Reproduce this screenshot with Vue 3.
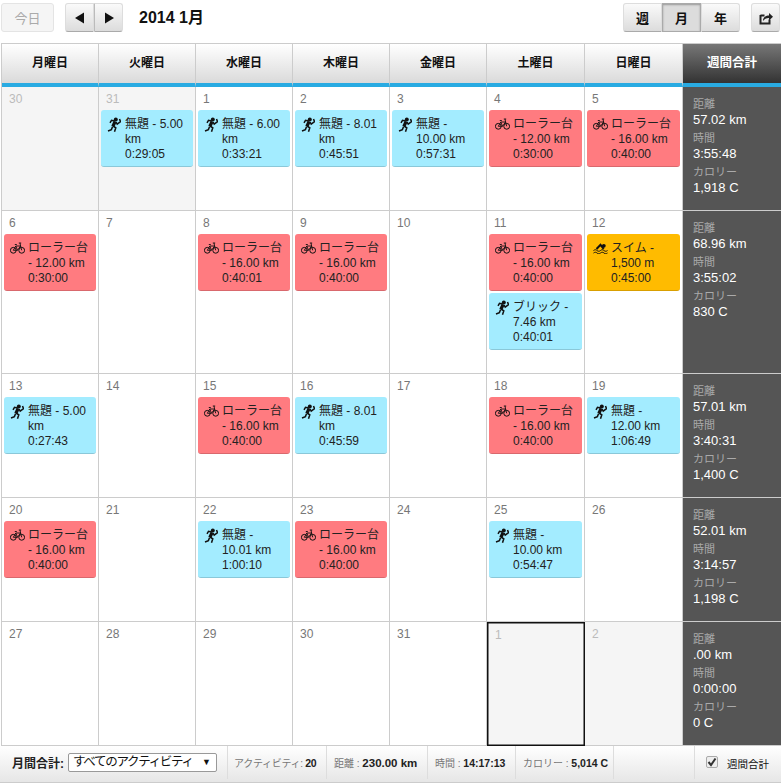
<template>
  <div class="page">
    <div class="toolbar">
      <button class="btn today" disabled>今日</button>
      <div class="btn-group nav">
        <button class="btn"><svg class="arrow" viewBox="0 0 12 12"><path d="M10 .5v11L1 6z" /></svg></button>
        <button class="btn"><svg class="arrow" viewBox="0 0 12 12"><path d="M2 .5v11L11 6z" /></svg></button>
      </div>
      <div class="title">2014 1月</div>
      <div class="spacer"></div>
      <div class="btn-group views">
        <button class="btn">週</button>
        <button class="btn active">月</button>
        <button class="btn">年</button>
      </div>
      <button class="btn share">
        <svg viewBox="0 0 14 14" width="14" height="14">
          <path d="M1.500 4.500h4M1.500 4v8.500h9V8.500" fill="none" stroke="#222" stroke-width="2" />
          <path d="M4 10c0-4 3-5.500 6-5.500V2l4 3.800-4 3.700V7c-3 0-4.500 1-6 3z" fill="#222" />
        </svg>
      </button>
    </div>

    <div class="calendar">
      <div v-for="(name, i) in dayNames" :key="name" class="head" :class="{ 'head-total': i === 7 }">{{ name }}</div>

      <template v-for="(week, w) in weeks" :key="w">
        <div
          v-for="day in week.days"
          :key="day.n + '-' + w"
          class="cell"
          :class="{ off: day.off, selected: day.selected }"
        >
          <div class="day-num">{{ day.n }}</div>
          <div v-for="(item, k) in day.items" :key="k" class="workout" :class="item.type">
            <div class="icon-col">
              <svg v-if="item.type === 'run'" class="ico" viewBox="0 0 14 15">
                <circle cx="8.800" cy="2.400" r="2" />
                <path d="M8 4.800 5.800 9.500" stroke-width="3.200" />
                <path d="M8.500 4.200 4.500 3.300 3 5.800M9 5l1.200 2.200 3.300-2.500-1-2.800M6 9l2.800 1.800-1.300 3.900M5.500 9.800 4.400 12.600 1 14" stroke-width="1.500" />
              </svg>
              <svg v-else-if="item.type === 'bike'" class="ico" viewBox="0 0 15 13">
                <circle cx="3.300" cy="9.300" r="2.900" />
                <circle cx="11.700" cy="9.300" r="2.900" />
                <path d="M3.300 9.300 5.800 5h4.800l1.100 4.300M5.800 5l1.700 4.300H3.300M7.500 9.300 10.600 5M10 2l.6 3M8.800 2h2.400M4.800 3.500h2" stroke-width=".9" />
              </svg>
              <svg v-else class="ico swim" viewBox="0 0 15 11">
                <circle cx="10.800" cy="2.800" r="1.900" />
                <path d="M3.500 6 7.500 1.800l3.200 4" stroke-width="2" />
                <path d="M.5 7.500c1.500-1 2.500-1 3.500 0s2.500 1 3.500 0 2.500-1 3.500 0 2.500 1 3.500 0M.5 10c1.500-1 2.500-1 3.500 0s2.500 1 3.500 0 2.500-1 3.500 0 2.500 1 3.500 0" stroke-width="1" />
              </svg>
            </div>
            <div class="workout-text">
              <div>{{ item.name }} - {{ item.dist }}</div>
              <div>{{ item.time }}</div>
            </div>
          </div>
        </div>
        <div class="totals">
          <div class="t-label">距離</div>
          <div class="t-value">{{ week.dist }}</div>
          <div class="t-label">時間</div>
          <div class="t-value">{{ week.time }}</div>
          <div class="t-label">カロリー</div>
          <div class="t-value">{{ week.cal }}</div>
        </div>
      </template>
    </div>

    <div class="footer">
      <div class="f-sec f-first">
        <b class="f-title">月間合計:</b>
        <div class="select">すべてのアクティビティ<span class="caret">▼</span></div>
      </div>
      <div class="f-sec f-act">アクティビティ: <b>20</b></div>
      <div class="f-sec f-dist">距離 : <b>230.00 km</b></div>
      <div class="f-sec f-time">時間 : <b>14:17:13</b></div>
      <div class="f-sec f-cal">カロリー : <b>5,014 C</b></div>
      <div class="f-sec f-gap"></div>
      <label class="f-check">
        <span class="check"><svg viewBox="0 0 10 10" width="10" height="10"><path d="M1.500 5 4 8l4.500-6.500" fill="none" stroke="#333" stroke-width="2" /></svg></span>
        週間合計
      </label>
    </div>
  </div>
</template>

<script setup>
const dayNames = ['月曜日', '火曜日', '水曜日', '木曜日', '金曜日', '土曜日', '日曜日', '週間合計']

const run = (name, dist, time) => ({ type: 'run', name, dist, time })
const bike = (dist, time) => ({ type: 'bike', name: 'ローラー台', dist, time })
const swim = (dist, time) => ({ type: 'swim', name: 'スイム', dist, time })

const d = (n, items = [], extra = {}) => ({ n, items, ...extra })

const weeks = [
  {
    days: [
      d(30, [], { off: true }),
      d(31, [run('無題', '5.00 km', '0:29:05')], { off: true }),
      d(1, [run('無題', '6.00 km', '0:33:21')]),
      d(2, [run('無題', '8.01 km', '0:45:51')]),
      d(3, [run('無題', '10.00\u00a0km', '0:57:31')]),
      d(4, [bike('12.00 km', '0:30:00')]),
      d(5, [bike('16.00 km', '0:40:00')])
    ],
    dist: '57.02 km',
    time: '3:55:48',
    cal: '1,918 C'
  },
  {
    days: [
      d(6, [bike('12.00 km', '0:30:00')]),
      d(7),
      d(8, [bike('16.00 km', '0:40:01')]),
      d(9, [bike('16.00 km', '0:40:00')]),
      d(10),
      d(11, [bike('16.00 km', '0:40:00'), run('ブリック', '7.46 km', '0:40:01')]),
      d(12, [swim('1,500 m', '0:45:00')])
    ],
    dist: '68.96 km',
    time: '3:55:02',
    cal: '830 C'
  },
  {
    days: [
      d(13, [run('無題', '5.00 km', '0:27:43')]),
      d(14),
      d(15, [bike('16.00 km', '0:40:00')]),
      d(16, [run('無題', '8.01 km', '0:45:59')]),
      d(17),
      d(18, [bike('16.00 km', '0:40:00')]),
      d(19, [run('無題', '12.00\u00a0km', '1:06:49')])
    ],
    dist: '57.01 km',
    time: '3:40:31',
    cal: '1,400 C'
  },
  {
    days: [
      d(20, [bike('16.00 km', '0:40:00')]),
      d(21),
      d(22, [run('無題', '10.01\u00a0km', '1:00:10')]),
      d(23, [bike('16.00 km', '0:40:00')]),
      d(24),
      d(25, [run('無題', '10.00\u00a0km', '0:54:47')]),
      d(26)
    ],
    dist: '52.01 km',
    time: '3:14:57',
    cal: '1,198 C'
  },
  {
    days: [
      d(27),
      d(28),
      d(29),
      d(30),
      d(31),
      d(1, [], { off: true, selected: true }),
      d(2, [], { off: true })
    ],
    dist: '.00 km',
    time: '0:00:00',
    cal: '0 C'
  }
]
</script>

<style>
body {
  background: #fff;
}
</style>

<style scoped>
.page {
  width: 781px;
  height: 783px;
  overflow: hidden;
  font-family: "Liberation Sans", "Noto Sans CJK JP", sans-serif;
  font-size: 12px;
  color: #333;
}

.toolbar {
  height: 43px;
  box-sizing: border-box;
  padding: 3px 1px 0 1px;
  display: flex;
  align-items: flex-start;
}

.spacer {
  flex: 1;
}

.btn {
  height: 29px;
  margin: 0;
  padding: 0;
  border: 1px solid #ddd;
  border-bottom-color: #aaa;
  border-radius: 3px;
  background: linear-gradient(#fafafa, #dcdcdc);
  font-family: inherit;
  font-size: 13px;
  font-weight: bold;
  color: #111;
  display: flex;
  align-items: center;
  justify-content: center;
}

.today {
  width: 53px;
  background: #f5f5f5;
  border-color: #e4e4e4;
  color: #aaa;
  font-weight: normal;
  font-size: 13px;
}

.btn-group {
  display: flex;
}

.btn-group .btn {
  border-radius: 0;
}

.btn-group .btn:first-child {
  border-radius: 3px 0 0 3px;
}

.btn-group .btn:last-child {
  border-radius: 0 3px 3px 0;
}

.nav {
  margin-left: 11px;
}

.nav .btn {
  width: 29px;
}

.nav .btn + .btn {
  border-left-color: #bbb;
}

.arrow {
  width: 12px;
  height: 12px;
  fill: #111;
}

.title {
  margin-left: 16px;
  line-height: 29px;
  font-size: 16px;
  font-weight: bold;
  color: #111;
}

.views .btn {
  width: 39px;
}

.views .active {
  background: #dcdcdc;
  border: 1px solid #aaa;
  box-shadow: inset 0 1px 2px #999;
}

.share {
  width: 29px;
  margin-left: 11px;
}

.calendar {
  margin-left: 1px;
  border-top: 1px solid #ccc;
  border-left: 1px solid #ccc;
  display: grid;
  grid-template-columns: 97px 97px 97px 97px 97px 98px 98px 98px;
}

.head {
  height: 39px;
  line-height: 39px;
  box-sizing: content-box;
  border-right: 1px solid #ccc;
  border-bottom: 4px solid #29abe2;
  background: linear-gradient(#fff, #dadada);
  text-align: center;
  font-weight: bold;
  color: #111;
}

.head-total {
  border-right: 0;
  background: linear-gradient(#777, #333);
  color: #fff;
  font-size: 12.500px;
}

.cell {
  min-height: 124px;
  box-sizing: border-box;
  padding: 0 2px 21px 2px;
  border-right: 1px solid #ccc;
  border-bottom: 1px solid #ccc;
  background: #fff;
}

.cell.off {
  background: #f5f5f5;
}

.cell.off .day-num {
  color: #bbb;
}

.cell.selected {
  border: 1px solid #111;
  box-shadow: inset 0 0 0 0.5px #111;
}

.day-num {
  height: 23px;
  line-height: 24px;
  padding-left: 5px;
  color: #777;
}

.workout {
  height: 57px;
  box-sizing: border-box;
  margin-bottom: 2px;
  padding: 7px 6px 0 0;
  border-bottom: 1px solid rgba(0, 0, 0, 0.15);
  border-radius: 3px;
  display: flex;
  line-height: 15px;
  color: #222;
}

.workout.run {
  background: #a3ecff;
}

.workout.bike {
  background: #ff7b80;
}

.workout.swim {
  background: #ffbb00;
}

.icon-col {
  width: 24px;
  flex: none;
  padding: 0 0 0 6px;
  box-sizing: border-box;
}

.ico {
  display: block;
  width: 14px;
  height: 15px;
  fill: none;
  stroke: #111;
}

.run .ico circle,
.swim .ico circle {
  fill: #111;
  stroke: none;
}

.swim .ico {
  width: 15px;
  height: 11px;
  margin-top: 2px;
}

.bike .ico {
  width: 15px;
  height: 13px;
}

.workout-text {
  width: 62px;
}

.totals {
  background: #555;
  border-bottom: 1px solid #ccc;
  padding: 10px 0 0 10px;
  box-sizing: border-box;
}

.t-label {
  height: 15px;
  line-height: 15px;
  font-size: 11px;
  color: #aaa;
}

.t-value {
  height: 19px;
  line-height: 15px;
  font-size: 13px;
  color: #fff;
}

.footer {
  height: 37px;
  box-sizing: border-box;
  border-bottom: 1px solid #ccc;
  background: linear-gradient(#fff, #e6e6e6);
  display: flex;
  align-items: stretch;
  font-size: 10px;
  color: #777;
}

.f-sec {
  border-right: 1px solid #ddd;
  display: flex;
  align-items: center;
  white-space: pre;
  margin-bottom: 3px;
  box-sizing: border-box;
}

.f-sec b {
  color: #222;
  font-size: 10.500px;
}

.f-first {
  width: 228px;
  padding-left: 12px;
}

.f-sec .f-title {
  font-size: 12px;
  margin-right: 4px;
}

.select {
  width: 149px;
  height: 19px;
  line-height: 17px;
  box-sizing: border-box;
  border: 1px solid #999;
  border-radius: 2px;
  background: #fff;
  padding-left: 4px;
  font-size: 12.500px;
  letter-spacing: -1.300px;
  color: #111;
  position: relative;
  white-space: nowrap;
  overflow: hidden;
}

.caret {
  position: absolute;
  right: 5px;
  top: 0;
  font-size: 9px;
  letter-spacing: 0;
  color: #111;
}

.f-act {
  width: 99px;
  padding-left: 6px;
  letter-spacing: -0.300px;
}

.f-dist {
  width: 101px;
  padding-left: 7px;
}

.f-sec.f-dist b {
  font-size: 11.500px;
}

.f-time {
  width: 88px;
  padding-left: 7px;
}

.f-cal {
  width: 98px;
  padding-left: 7px;
}

.f-gap {
  width: 81px;
}

.f-check {
  flex: 1;
  display: flex;
  align-items: center;
  padding-left: 11px;
  margin-bottom: 2px;
  font-size: 10.500px;
  color: #111;
}

.check {
  width: 12px;
  height: 12px;
  box-sizing: border-box;
  border: 1px solid #aaa;
  border-radius: 2px;
  background: #eee;
  display: flex;
  align-items: center;
  justify-content: center;
  margin: -3px 9px 0 0;
}
</style>
